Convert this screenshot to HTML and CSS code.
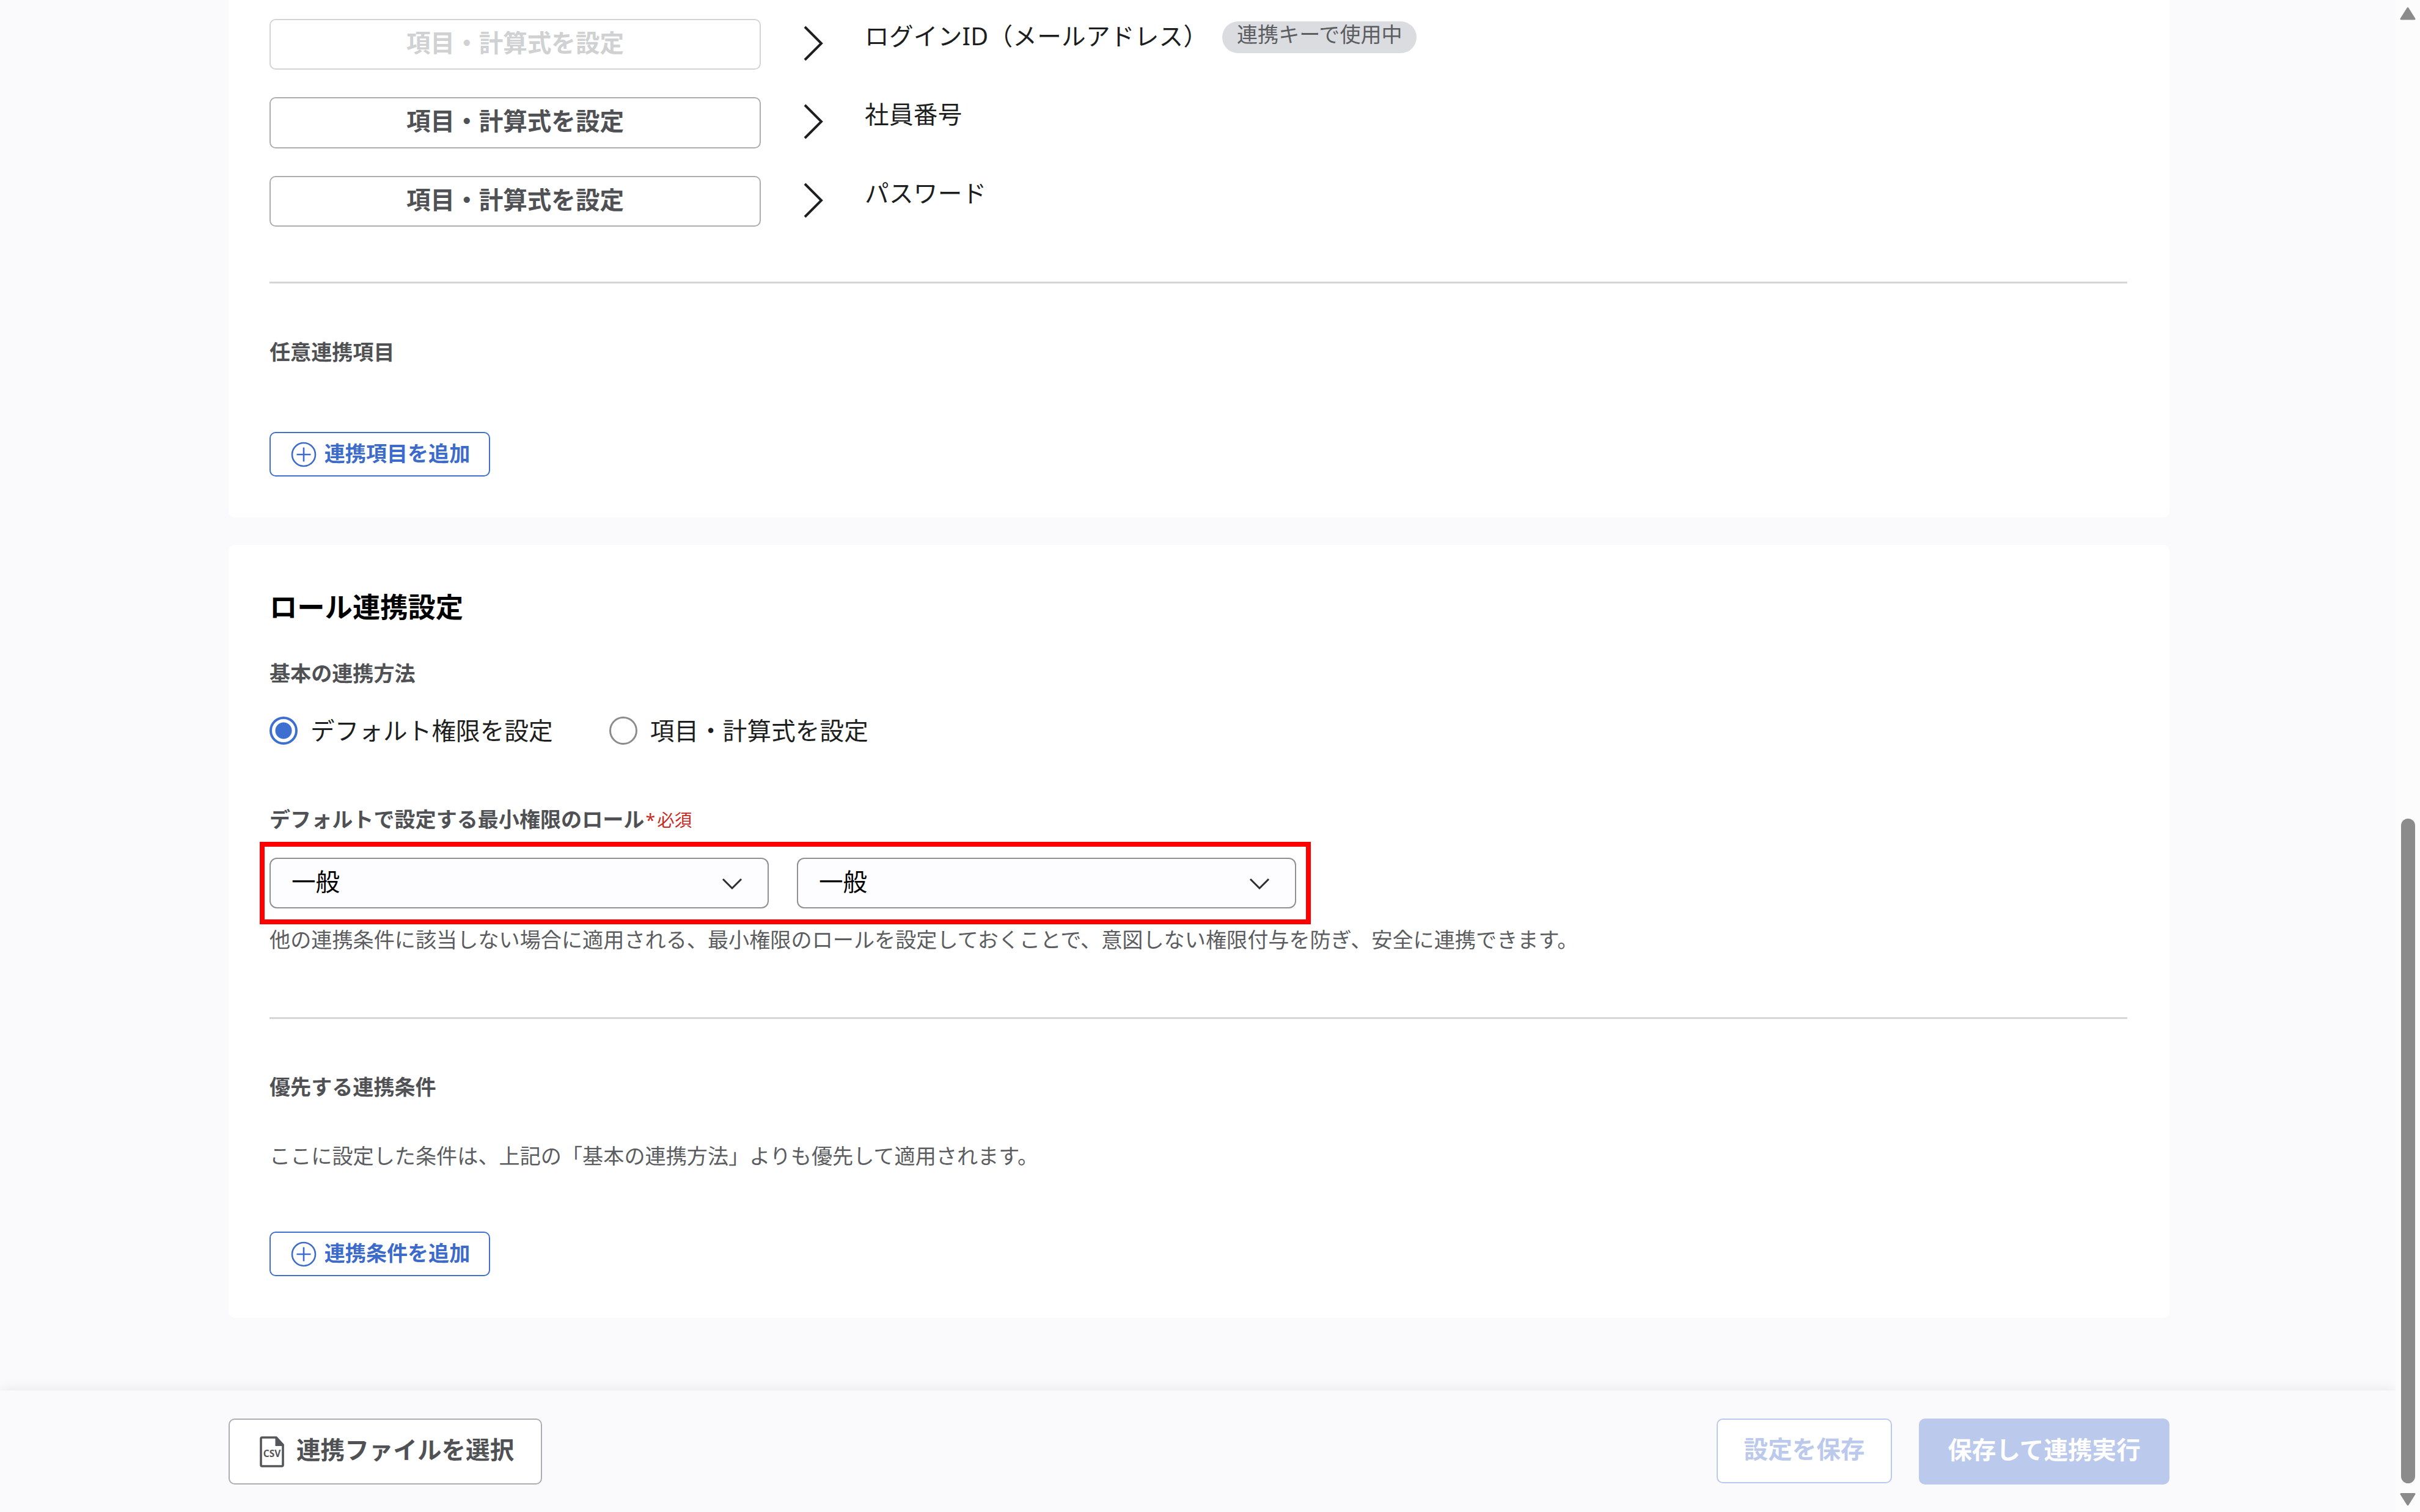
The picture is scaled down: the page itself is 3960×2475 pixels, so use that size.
FILE: index.html
```html
<!DOCTYPE html>
<html lang="ja">
<head>
<meta charset="utf-8">
<title>連携設定</title>
<link rel="stylesheet" href="styles.css">
</head>
<body>
<div class="app">
  <div class="view">
    <main class="content">
      <section class="card card-items">
        <div class="rows">
          <div class="map-row">
            <button class="btn btn-map is-disabled">項目・計算式を設定</button>
            <svg class="arrow" viewBox="0 0 32 58"><path d="M2 2 L29 29 L2 56"/></svg>
            <div class="map-label">ログインID（メールアドレス）</div>
            <span class="tag">連携キーで使用中</span>
          </div>
          <div class="map-row">
            <button class="btn btn-map">項目・計算式を設定</button>
            <svg class="arrow" viewBox="0 0 32 58"><path d="M2 2 L29 29 L2 56"/></svg>
            <div class="map-label">社員番号</div>
          </div>
          <div class="map-row">
            <button class="btn btn-map">項目・計算式を設定</button>
            <svg class="arrow" viewBox="0 0 32 58"><path d="M2 2 L29 29 L2 56"/></svg>
            <div class="map-label">パスワード</div>
          </div>
        </div>
        <hr class="rule rule-items">
        <h3 class="sub">任意連携項目</h3>
        <button class="btn btn-add add-item">
          <svg class="plus" viewBox="0 0 42 42"><circle cx="21" cy="21" r="19"/><path d="M21 9.5V32.5M9.5 21H32.5"/></svg>
          <span>連携項目を追加</span>
        </button>
      </section>

      <section class="card card-role">
        <h2 class="title">ロール連携設定</h2>
        <h3 class="sub">基本の連携方法</h3>
        <div class="radios">
          <label class="radio"><i class="dot is-on"></i>デフォルト権限を設定</label>
          <label class="radio"><i class="dot"></i>項目・計算式を設定</label>
        </div>
        <div class="field-label">デフォルトで設定する最小権限のロール<span class="required"><b>*</b>必須</span></div>
        <div class="selects">
          <div class="select"><span>一般</span><svg class="caret" viewBox="0 0 34 20"><path d="M2 2 L17 17 L32 2"/></svg></div>
          <div class="select"><span>一般</span><svg class="caret" viewBox="0 0 34 20"><path d="M2 2 L17 17 L32 2"/></svg></div>
        </div>
        <p class="note">他の連携条件に該当しない場合に適用される、最小権限のロールを設定しておくことで、意図しない権限付与を防ぎ、安全に連携できます。</p>
        <hr class="rule rule-role">
        <h3 class="sub">優先する連携条件</h3>
        <p class="note note-priority">ここに設定した条件は、上記の「基本の連携方法」よりも優先して適用されます。</p>
        <button class="btn btn-add add-cond">
          <svg class="plus" viewBox="0 0 42 42"><circle cx="21" cy="21" r="19"/><path d="M21 9.5V32.5M9.5 21H32.5"/></svg>
          <span>連携条件を追加</span>
        </button>
      </section>
    </main>

    <footer class="footer">
      <button class="btn btn-file">
        <svg class="csv" viewBox="0 0 40 51">
          <path class="sheet" d="M4 2H27L38 14V47Q38 49 36 49H4Q2 49 2 47V4Q2 2 4 2Z"/>
          <path class="fold" d="M25.500 1.500V16H39Z"/>
          <text x="20" y="33.500">CSV</text>
        </svg>
        <span>連携ファイルを選択</span>
      </button>
      <div class="footer-actions">
        <button class="btn btn-save">設定を保存</button>
        <button class="btn btn-run">保存して連携実行</button>
      </div>
    </footer>
  </div>

  <aside class="scrollbar">
    <svg class="scroll-arrow" viewBox="0 0 28 22"><path d="M14 2.500L25 20H3Z"/></svg>
    <div class="thumb"></div>
    <svg class="scroll-arrow" viewBox="0 0 28 22"><path d="M14 20L25 2.500H3Z"/></svg>
  </aside>
</div>
</body>
</html>
```
FILE: styles.css
```css
* { box-sizing: border-box; }

body {
  margin: 0;
  background: #fafafc;
  color: #1d1e20;
  font-family: "Noto Sans", "Noto Sans CJK JP", sans-serif;
  font-size: 39.6px;
}

h2, h3, p, hr { margin: 0; border: 0; }

svg { display: block; flex: none; fill: none; }

.app {
  display: flex;
  width: 3960px;
  height: 2475px;
  overflow: hidden;
}

.view {
  display: flex;
  flex-direction: column;
  width: 3920px;
}

.content {
  display: flex;
  flex-direction: column;
  gap: 45px;
  height: 2276px;
  padding: 0 370px 0 374px;
}

.card {
  display: flex;
  flex-direction: column;
  align-items: flex-start;
  padding: 0 67px;
  background: #fff;
}

.card-items {
  height: 847px;
  padding-top: 31px;
  border-radius: 0 0 10px 10px;
}

.card-role {
  height: 1265px;
  padding-top: 72px;
  border-radius: 10px;
}

/* buttons */
.btn {
  display: flex;
  align-items: center;
  justify-content: center;
  margin: 0;
  padding: 0;
  border: 2px solid #acadb0;
  border-radius: 10px;
  background: #fff;
  color: #4f5154;
  font: 700 39.6px/60px "Noto Sans", "Noto Sans CJK JP", sans-serif;
  white-space: nowrap;
}

.btn-map {
  width: 804px;
  height: 83px;
  padding-bottom: 6px;
}

.map-row:nth-child(2) .btn-map { height: 84px; }

.btn-map.is-disabled {
  border-color: #d3d4d6;
  color: #d0d1d3;
}

.btn-add {
  gap: 13px;
  width: 361px;
  height: 73px;
  padding-left: 2px;
  border-color: #3f6fd0;
  color: #3c6bcb;
  font-size: 34.1px;
}

.btn-add span { margin-bottom: 4px; }

.plus { width: 42px; height: 42px; stroke: #3c6bcb; stroke-width: 2.6; }

/* mapping rows */
.rows {
  display: flex;
  flex-direction: column;
  gap: 45px;
}

.map-row {
  display: flex;
  align-items: flex-start;
}

.arrow {
  width: 32px;
  height: 58px;
  margin: 11px 68px 0 70px;
  stroke: #1d1e20;
  stroke-width: 4;
}

.map-label {
  letter-spacing: .3px;
  line-height: 57px;
  white-space: nowrap;
}

.tag {
  width: 318px;
  height: 52px;
  margin: 4px 0 0 24px;
  border-radius: 26px;
  background: #dadce0;
  color: #5b5d60;
  font-size: 34.1px;
  line-height: 42px;
  text-align: center;
}

.rule {
  width: 3040px;
  height: 3px;
  background: #d5d6d8;
}

.rule-items { margin: 90px 0 87px; }
.rule-role { margin: 102px 0 86px; }

.sub, .field-label {
  color: #4f5154;
  font-size: 34.1px;
  font-weight: 700;
  line-height: 50px;
}

.add-item { margin-top: 106px; }
.add-cond { margin-top: 99px; }

.title {
  margin-bottom: 53px;
  color: #000;
  font-size: 45.3px;
  line-height: 60px;
}

/* radios */
.radios {
  display: flex;
  gap: 92px;
  margin-top: 38px;
}

.radio {
  display: flex;
  align-items: center;
  gap: 21px;
  height: 60px;
  padding-bottom: 3px;
  letter-spacing: .1px;
}

.dot {
  width: 46px;
  height: 46px;
  margin-top: 5px;
  border: 3px solid #8b8c8f;
  border-radius: 50%;
}

.dot.is-on {
  border: 4px solid #3c6fd0;
  background: radial-gradient(circle, #3c6fd0 13px, #fff 14px);
}

.field-label {
  height: 50px;
  margin-top: 91px;
  white-space: nowrap;
}

.required {
  margin-left: 2px;
  color: #c7291e;
  font-size: 28.5px;
  font-weight: 400;
  line-height: 1;
  vertical-align: 1px;
}

.required b { margin-right: 3px; font-weight: 400; }

/* selects, outlined together */
.selects {
  display: flex;
  gap: 46px;
  margin: 12px 0 0 -16px;
  padding: 18px 16px 18px 8px;
  border: 8px solid #f00;
}

.select {
  display: flex;
  align-items: center;
  justify-content: space-between;
  width: 817px;
  height: 83px;
  padding: 0 41px 0 34px;
  border: 2px solid #8f9093;
  border-radius: 12px;
  background: #fdfdff;
  color: #000;
}

.select span { margin-bottom: 5px; line-height: 60px; }

.caret { width: 34px; height: 20px; margin-top: 3px; stroke: #2c2d2f; stroke-width: 3; }

.note {
  color: #5b5d60;
  font-size: 34.15px;
  line-height: 50px;
  white-space: nowrap;
}

.note-priority { margin-top: 63px; }

/* footer */
.footer {
  display: flex;
  align-items: flex-start;
  justify-content: space-between;
  height: 199px;
  padding: 46px 370px 0 374px;
  background: #fafafc;
  box-shadow: 0 0 20px rgba(0, 0, 0, .09);
}

.btn-file {
  justify-content: flex-start;
  gap: 20px;
  width: 513px;
  height: 108px;
  padding-left: 49px;
}

.btn-file span, .btn-save, .btn-run { padding-bottom: 6px; }

.csv { width: 40px; height: 51px; }
.sheet { stroke: #55565a; stroke-width: 3.6; }
.fold { fill: #55565a; }

.csv text {
  fill: #55565a;
  font: 700 15.5px "Noto Sans", sans-serif;
  text-anchor: middle;
}

.footer-actions { display: flex; gap: 44px; }

.btn-save {
  width: 287px;
  height: 106px;
  border-color: #bac9ec;
  color: #bac9ec;
}

.btn-run {
  width: 410px;
  height: 108px;
  border: 0;
  background: #bac9ec;
  color: #fff;
}

/* scrollbar */
.scrollbar {
  display: flex;
  flex-direction: column;
  align-items: center;
  justify-content: space-between;
  width: 40px;
  padding: 11px 0 10px;
  background: #fcfcfc;
}

.thumb {
  width: 23px;
  height: 1088px;
  margin: auto 0 15px;
  border-radius: 12px;
  background: #8b8b8b;
}

.scroll-arrow {
  width: 28px;
  height: 22px;
  fill: #8b8b8b;
  stroke: #8b8b8b;
  stroke-width: 3;
  stroke-linejoin: round;
}
```
